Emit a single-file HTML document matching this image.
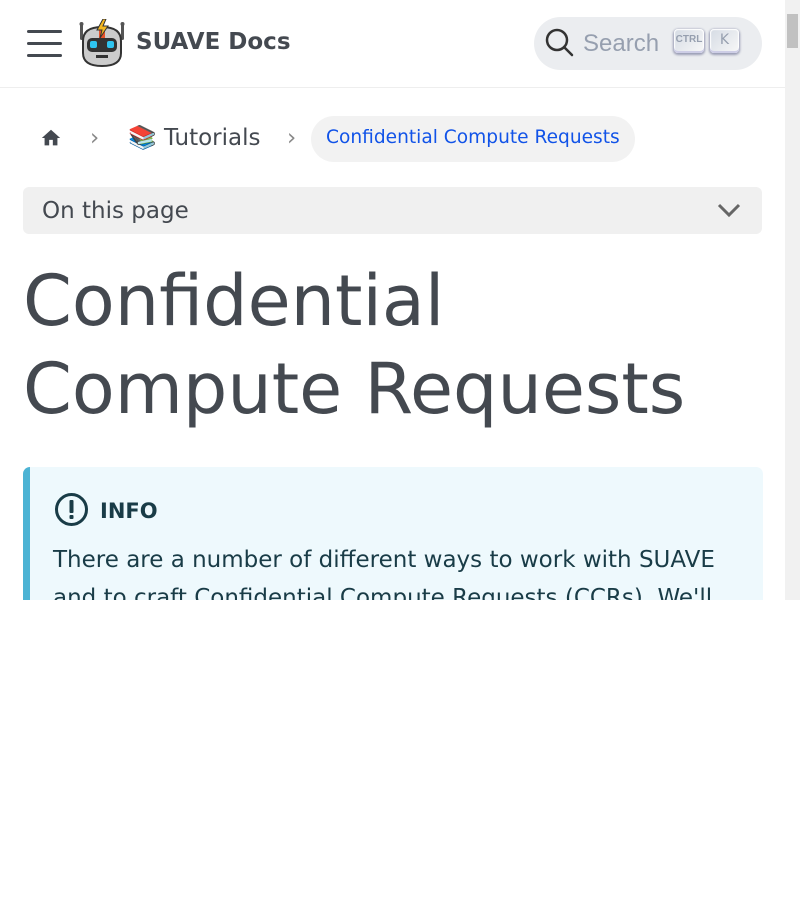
<!DOCTYPE html>
<html><head><meta charset="utf-8"><style>
body{margin:0;background:#fff;font-family:"DejaVu Sans","Liberation Sans",sans-serif;}
#vp{position:absolute;left:0;top:0;width:785px;height:600px;overflow:hidden;background:#fff;}
#sb{position:absolute;left:785px;top:0;width:15px;height:600px;background:#f1f1f1;}
#sb .th{position:absolute;left:2px;top:14px;width:11px;height:34px;background:#c1c1c1;}
.nav{position:absolute;left:0;top:0;width:785px;height:87px;border-bottom:1px solid #eee;}
.ham span{position:absolute;left:27px;width:35px;height:3px;background:#444950;border-radius:2px}
.brand{position:absolute;left:136px;top:29px;font-weight:bold;font-size:23px;color:#444950}
.search{position:absolute;left:534px;top:17px;width:228px;height:53px;border-radius:27px;background:#ebedf0}
.search .t{position:absolute;left:49px;top:13px;font-family:"Liberation Sans",sans-serif;font-size:24px;color:#969faf}
.key{position:absolute;top:12px;height:24px;border-radius:4px;background:linear-gradient(-225deg,#d5dbe4,#f8f8f8);box-shadow:inset 0 -2px 0 #cdcde6,inset 0 0 1px 1px #fff,0 1px 2px 1px rgba(30,35,90,.4);color:#969faf;font-size:14px;text-align:center;line-height:22px}
.bc{position:absolute;top:116px;height:46px;line-height:44px;font-size:23px;color:#444950}
.h1{position:absolute;left:23px;top:257px;font-size:70px;line-height:88px;color:#444950;white-space:nowrap}
.otp{position:absolute;left:23px;top:187px;width:739px;height:47px;background:#f0f0f0;border-radius:6px}
.info{position:absolute;left:23px;top:467px;width:740px;height:200px;background:#eef9fd;border-left:7px solid #4cb3d4;border-radius:7px;box-sizing:border-box;color:#193c47}
</style></head><body>
<div id="vp">
<div class="nav">
 <div class="ham"><span style="top:30px"></span><span style="top:42px"></span><span style="top:54px"></span></div>
 <svg style="position:absolute;left:79px;top:19px" width="46" height="48" viewBox="0 0 46 48">
  <rect x="1" y="5" width="3" height="16" rx="1.5" fill="#555"/><rect x="42" y="5" width="3" height="16" rx="1.5" fill="#555"/>
  <circle cx="2.5" cy="5" r="2" fill="#555"/><circle cx="43.5" cy="5" r="2" fill="#555"/>
  <path d="M4 22 Q4 8 23 8 Q42 8 42 22 L42 34 Q42 47 23 47 Q4 47 4 34Z" fill="#ccc" stroke="#333" stroke-width="2"/>
  <rect x="20" y="9" width="6" height="10" fill="#e8532a"/>
  <path d="M24 0 L18 11 L23 11 L21 19 L29 7 L24 7 L27 0Z" fill="#f5b820" stroke="#333" stroke-width="1"/>
  <rect x="8" y="19" width="30" height="14" rx="5" fill="#333"/>
  <rect x="11" y="22" width="7" height="7" rx="2" fill="#2ec4f0"/><rect x="28" y="22" width="7" height="7" rx="2" fill="#2ec4f0"/>
  <rect x="17" y="36" width="12" height="3" fill="#333"/>
 </svg>
 <div class="brand">SUAVE Docs</div>
 <div class="search">
  <svg style="position:absolute;left:11px;top:11px" width="30" height="30" viewBox="0 0 30 30"><circle cx="12" cy="12" r="10" fill="none" stroke="#333" stroke-width="2.5"/><path d="M19 19 L27 27" stroke="#333" stroke-width="2.5" stroke-linecap="round"/></svg>
  <div class="t">Search</div>
  <div class="key" style="left:140px;width:30px;font-size:10px;font-weight:bold;font-family:'Liberation Sans Narrow','Liberation Sans',sans-serif">CTRL</div>
  <div class="key" style="left:176px;width:29px">K</div>
 </div>
</div>
<svg style="position:absolute;left:40px;top:127px" width="22" height="22" viewBox="0 0 24 24"><path d="M10 20v-6h4v6h5v-8h3L12 3 2 12h3v8z" fill="#444950"/></svg>
<div class="bc" style="left:90px;color:#888">›</div>
<div class="bc" style="left:128px">📚 Tutorials</div>
<div class="bc" style="left:287px;color:#888">›</div>
<div class="bc" style="left:311px;padding:0 15px;background:#f2f2f2;border-radius:23px;color:#1153e8;font-size:18.6px">Confidential Compute Requests</div>
<div class="otp"><span style="position:absolute;left:19px;top:11px;font-size:23px;color:#444950">On this page</span>
 <svg style="position:absolute;left:694px;top:14px" width="24" height="18" viewBox="0 0 24 18"><path d="M2 4 L12 14 L22 4" fill="none" stroke="#666" stroke-width="3"/></svg></div>
<div class="h1">Confidential<br>Compute Requests</div>
<div class="info">
 <svg style="position:absolute;left:24px;top:25px" width="35" height="35" viewBox="0 0 35 35"><circle cx="17.5" cy="17.5" r="15" fill="none" stroke="#193c47" stroke-width="3"/><rect x="15.5" y="8" width="4" height="13" rx="1" fill="#193c47"/><rect x="15.5" y="23" width="4" height="4" rx="1" fill="#193c47"/></svg>
 <div style="position:absolute;left:70px;top:32px;font-weight:bold;font-size:21px">INFO</div>
 <div style="position:absolute;left:23px;top:74px;width:700px;font-size:23px;line-height:38px">There are a number of different ways to work with SUAVE and to craft Confidential Compute Requests (CCRs). We'll</div>
</div>
</div>
<div id="sb"><div class="th"></div></div>
</body></html>
